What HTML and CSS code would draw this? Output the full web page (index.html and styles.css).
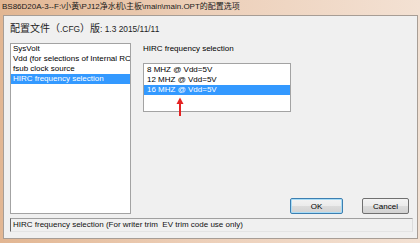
FILE: index.html
```html
<!DOCTYPE html>
<html>
<head>
<meta charset="utf-8">
<link rel="stylesheet" href="styles.css">
</head>
<body>
<div class="window">
  <div class="titlebar">BS86D20A-3--F:\小黄\PJ12净水机\主板\main\main.OPT的配置选项</div>
  <div class="client">
    <div class="header"><span class="cjk">配置文件（</span>.CFG<span class="cjk">）版</span>: 1.3 2015/11/11</div>
    <div class="main">
      <ul class="listbox left">
        <li>SysVolt</li>
        <li>Vdd (for selections of Internal RC</li>
        <li>fsub clock source</li>
        <li class="sel">HIRC frequency selection</li>
      </ul>
      <div class="pane">
        <div class="label">HIRC frequency selection</div>
        <ul class="listbox right">
          <li>8 MHZ @ Vdd=5V</li>
          <li>12 MHZ @ Vdd=5V</li>
          <li class="sel">16 MHZ @ Vdd=5V</li>
        </ul>
        <div class="buttons">
          <button class="btn ok">OK</button>
          <button class="btn cancel">Cancel</button>
        </div>
        <svg class="arrow" width="8" height="20" viewBox="0 0 8 20">
          <polygon points="4,0.5 0.5,7 7.5,7" fill="#e42222"/>
          <rect x="3" y="6" width="2" height="13" fill="#e42222"/>
        </svg>
      </div>
    </div>
    <div class="status">HIRC frequency selection (For writer trim&nbsp; EV trim code use only)</div>
  </div>
</div>
</body>
</html>
```
FILE: styles.css
```css
html, body {
  margin: 0;
  padding: 0;
}
body {
  width: 420px;
  height: 243px;
  overflow: hidden;
  font-family: "Liberation Sans", "Noto Sans CJK SC", sans-serif;
  font-size: 8px;
  color: #000;
}
.window {
  height: 243px;
  box-sizing: border-box;
  display: flex;
  flex-direction: column;
  background: linear-gradient(to right, #e2b692, #ecceb7 45%, #f3e1d3);
}
.titlebar {
  height: 15px;
  line-height: 14px;
  padding-left: 2px;
  white-space: nowrap;
  color: #1a1a1a;
  font-size: 8px;
}
.client {
  flex: 1;
  margin: 0 2px 4px 3px;
  border: 1px solid #a79d95;
  background: #f0f0f0;
  display: flex;
  flex-direction: column;
  padding: 7px 4px 6px 6px;
}
.header {
  height: 12px;
  line-height: 12px;
  font-size: 8.4px;
  color: #1e1e1e;
  white-space: nowrap;
}
.header .cjk {
  font-size: 10px;
}
.main {
  display: flex;
  height: 171px;
  margin-top: 8px;
}
.listbox {
  list-style: none;
  margin: 0;
  padding: 0;
  background: #fff;
  border: 1px solid #a3a3a3;
  box-sizing: border-box;
  overflow: hidden;
}
.listbox li {
  height: 10px;
  line-height: 10px;
  padding-left: 2px;
  white-space: nowrap;
}
.listbox li.sel {
  background: #3399ff;
  color: #fff;
}
.listbox.left {
  width: 121px;
  height: 171px;
}
.pane {
  position: relative;
  flex: 1;
  margin-left: 12px;
  padding-right: 4px;
  display: flex;
  flex-direction: column;
}
.label {
  margin-top: 1px;
  height: 10px;
  line-height: 10px;
}
.listbox.right {
  width: 148px;
  height: 49px;
  margin-top: 9px;
  padding-top: 1px;
}
.listbox.right li {
  padding-left: 3px;
}
.buttons {
  margin-top: auto;
  display: flex;
  justify-content: flex-end;
  gap: 19px;
}
.btn {
  height: 16px;
  padding: 0;
  font-family: "Liberation Sans", sans-serif;
  font-size: 8px;
  color: #000;
  border: 1px solid #707070;
  border-radius: 2px;
  background: linear-gradient(#f3f3f3, #ebebeb 50%, #dcdcdc 51%, #d2d2d2);
  box-sizing: border-box;
}
.btn.ok {
  width: 53px;
  border-color: #3c7fb1;
  box-shadow: inset 0 0 0 1px #a9dcf6;
}
.btn.cancel {
  width: 47px;
}
.arrow {
  position: absolute;
  left: 33px;
  top: 54px;
}
.status {
  margin-top: 4px;
  height: 14px;
  box-sizing: border-box;
  line-height: 12px;
  padding-left: 2px;
  border-top: 1px solid #a0a0a0;
  border-left: 1px solid #646464;
  border-right: 1px solid #dcdcdc;
  border-bottom: 1px solid #e4e4e4;
  white-space: nowrap;
  color: #111;
}
```
